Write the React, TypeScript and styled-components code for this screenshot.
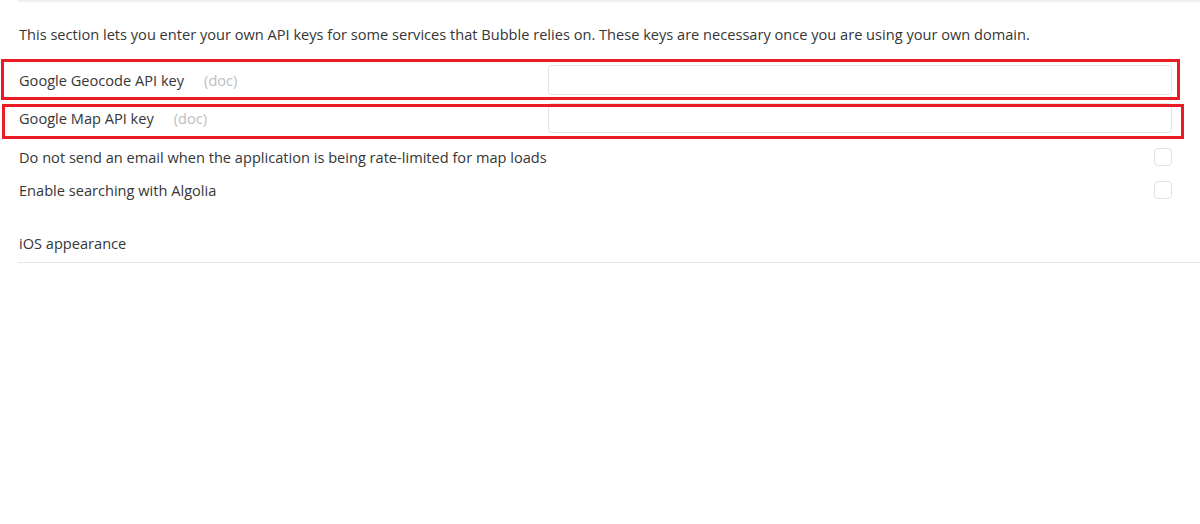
import React from "react";
import styled, { createGlobalStyle } from "styled-components";

const Global = createGlobalStyle`
  html, body { margin: 0; padding: 0; background: #fff; }
  body { font-family: "Open Sans", "Noto Sans", Arial, sans-serif; color: #363636; }
`;

const Page = styled.div`
  position: relative;
  width: 1200px;
  height: 524px;
  overflow: hidden;
  background: #fff;
`;

const Section = styled.div`
  margin-left: 18px;
  display: flex;
  flex-direction: column;
  font-size: 14.6px;
`;

const TopBar = styled.div`
  height: 2px;
  background: #efefef;
`;

const Description = styled.p`
  margin: 22px 0 17px 1px;
  font-size: inherit;
  line-height: 20px;
`;

const KeyRow = styled.div`
  display: flex;
  align-items: center;
  height: 38px;
  padding-right: 28px;
`;

const Label = styled.div`
  width: 529px;
  flex: none;
  display: flex;
  align-items: center;
  gap: 20px;
  padding-left: 1px;
  line-height: 20px;
  margin-top: -1px;
`;

const Doc = styled.span`
  color: #bdbdbd;
`;

const KeyInput = styled.input`
  flex: 1;
  height: 30px;
  box-sizing: border-box;
  border: 1px solid #e4e4e4;
  border-radius: 3px;
  background: #fff;
  outline: none;
`;

const CheckList = styled.div`
  margin-top: 3px;
  display: flex;
  flex-direction: column;
`;

const CheckRow = styled.label`
  display: flex;
  align-items: center;
  justify-content: space-between;
  height: 33px;
  padding-left: 1px;
  padding-right: 28px;
  line-height: 20px;
`;

const Box = styled.span`
  width: 18px;
  height: 18px;
  margin-top: 1px;
  box-sizing: border-box;
  border: 1px solid #e2e2e2;
  border-radius: 4px;
`;

const SubHeader = styled.div`
  margin-top: 27px;
  padding: 0 0 9px 1px;
  line-height: 20px;
  border-bottom: 1px solid #e6e6e6;
`;

const Highlight = styled.div<{ $l: number; $t: number; $w: number; $h: number }>`
  position: absolute;
  left: ${(p) => p.$l}px;
  top: ${(p) => p.$t}px;
  width: ${(p) => p.$w}px;
  height: ${(p) => p.$h}px;
  box-sizing: border-box;
  border: 3px solid #ec1c24;
  pointer-events: none;
`;

export default function App() {
  return (
    <Page>
      <Global />
      <Section>
        <TopBar />
        <Description>
          This section lets you enter your own API keys for some services that Bubble relies on. These keys are necessary once you are using your own domain.
        </Description>
        <KeyRow>
          <Label>
            Google Geocode API key <Doc>(doc)</Doc>
          </Label>
          <KeyInput />
        </KeyRow>
        <KeyRow>
          <Label>
            Google Map API key <Doc>(doc)</Doc>
          </Label>
          <KeyInput />
        </KeyRow>
        <CheckList>
          <CheckRow>
            Do not send an email when the application is being rate-limited for map loads
            <Box />
          </CheckRow>
          <CheckRow>
            Enable searching with Algolia
            <Box />
          </CheckRow>
        </CheckList>
        <SubHeader>iOS appearance</SubHeader>
      </Section>
      <Highlight $l={1} $t={59} $w={1179} $h={41} />
      <Highlight $l={2} $t={104} $w={1182} $h={35} />
    </Page>
  );
}
